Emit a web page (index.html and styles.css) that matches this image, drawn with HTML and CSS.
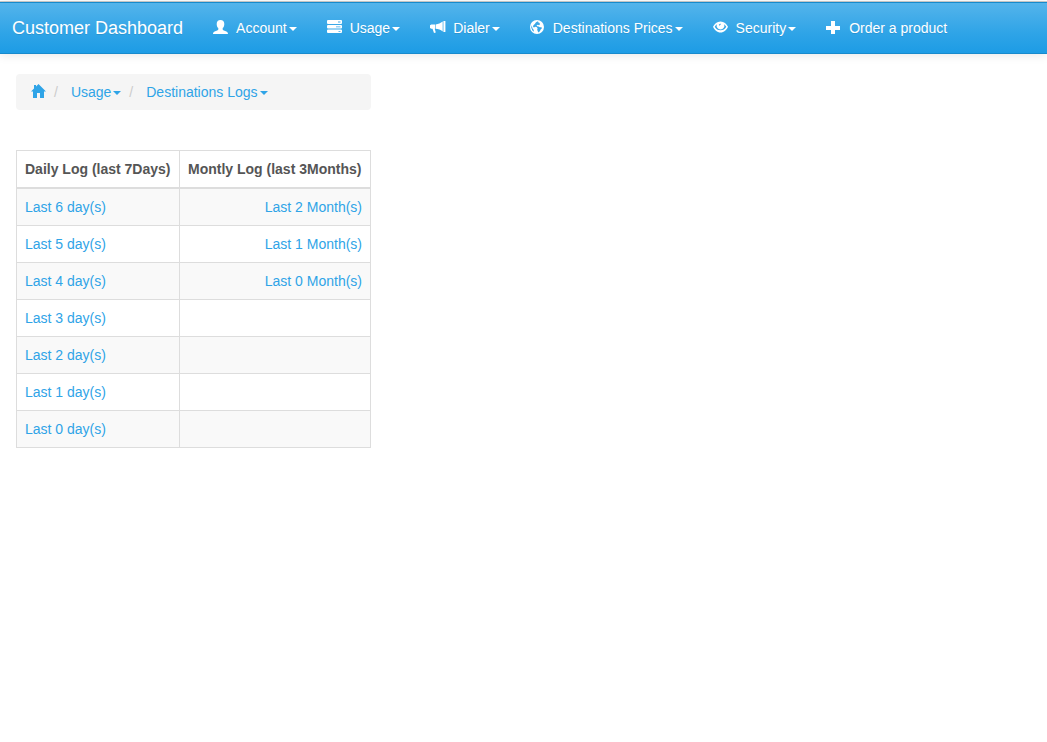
FILE: index.html
```
<!DOCTYPE html>
<html lang="en">
<head>
    <meta charset="UTF-8">
    <meta name="viewport" content="width=device-width, initial-scale=1.0">
    <title>Customer Dashboard</title>
    <link rel="stylesheet" href="styles.css">
</head>
<body>
    <nav class="navbar">
        <a class="brand" href="#">Customer Dashboard</a>
        <ul class="menu">
            <li><a href="#">
                <svg class="icon" viewBox="0 0 15 14"><path d="M7.500 0C9.900 0 11.300 1.500 11.300 3.900C11.300 5.900 10.700 7.200 9.700 8V9.200C9.700 9.900 10.200 10.200 10.900 10.500L13.400 11.500C14.500 12 15 12.800 15 14H0C0 12.800 0.500 12 1.600 11.500L4.100 10.500C4.800 10.200 5.300 9.900 5.300 9.200V8C4.300 7.200 3.700 5.900 3.700 3.900C3.700 1.500 5.100 0 7.500 0Z"/></svg>
                <span>Account</span><b class="caret"></b>
            </a></li>
            <li><a href="#">
                <svg class="icon" viewBox="0 0 15 14"><path fill-rule="evenodd" d="M1 0H14Q15 0 15 1V3Q15 4 14 4H1Q0 4 0 3V1Q0 0 1 0ZM11 1.600V2.400H13.500V1.600ZM1 5H14Q15 5 15 6V7.500Q15 8.500 14 8.500H1Q0 8.500 0 7.500V6Q0 5 1 5ZM9 6.400V7.200H13.500V6.400ZM1 9.500H14Q15 9.500 15 10.500V12Q15 13 14 13H1Q0 13 0 12V10.500Q0 9.500 1 9.500ZM11.500 11V11.800H13.500V11Z"/></svg>
                <span>Usage</span><b class="caret"></b>
            </a></li>
            <li><a href="#">
                <svg class="icon" viewBox="0 0 15 14"><path d="M13.400 1H15.400V12H13.400ZM12.700 1.600V11.400C10.500 9.900 8.400 9 5.600 8.800V4.600C8.400 4.200 10.500 3.200 12.700 1.600ZM0 5.300L1.300 4.600H5V8.800H4.700L5.800 12.500L4 13L2.500 8.800H1.300L0 8Z"/></svg>
                <span>Dialer</span><b class="caret"></b>
            </a></li>
            <li><a href="#">
                <svg class="icon" viewBox="0 0 15 14"><path fill-rule="evenodd" d="M7 0A7 7 0 1 1 7 14A7 7 0 1 1 7 0ZM8 1.200L6 2.200L4.800 4L3.400 5.200L3 7L4.200 7.600L5 6.800L6.600 7L7.600 8.200L7.200 9.800L8 11.800L8.600 12.600L10 11L10.600 9.600L11.800 8.400L11.600 7.200L9.800 7.200L8.600 6.400L7 6.200L6.600 5.200L8 4.800L9 5.200L10 4.200L9.400 2.800L8.400 2.600ZM1.800 5.200L1.200 7.600L2.400 10.400L4 11.800L3.600 9.800L2.400 8.200Z"/></svg>
                <span>Destinations Prices</span><b class="caret"></b>
            </a></li>
            <li><a href="#">
                <svg class="icon" viewBox="0 0 15 14"><path fill-rule="evenodd" d="M7.500 1.500C11 1.500 13.500 4 15 6.700C13.500 9.800 11 12.500 7.500 12.500S1.500 9.800 0 6.700C1.500 4 4 1.500 7.500 1.500ZM3.900 4.200C2.900 4.900 2.200 5.800 1.700 6.700C3 9.100 4.900 10.200 7.500 10.200S12 9.100 13.300 6.700C12.800 5.800 12.100 4.900 11.100 4.200A3.900 3.900 0 1 1 3.900 4.200ZM5.800 4.800L7.300 3.600L7.800 4.500L6.400 5.800Z"/></svg>
                <span>Security</span><b class="caret"></b>
            </a></li>
            <li><a href="#">
                <svg class="icon" viewBox="0 0 15 14"><path d="M5 1H9V6H14V10H9V14H5V10H0V6H5Z"/></svg>
                <span>Order a product</span>
            </a></li>
        </ul>
    </nav>

    <main class="content">
        <ul class="breadcrumb">
            <li><a href="#" aria-label="Home">
                <svg class="icon" viewBox="0 0 15 14"><path d="M7.500 0L15 7.400H13V14H9V9H6V14H2V7.400H0L3 4.400V1H5V2.500Z"/></svg>
            </a></li>
            <li><a href="#">Usage<b class="caret"></b></a></li>
            <li><a href="#">Destinations Logs<b class="caret"></b></a></li>
        </ul>

        <table class="logs">
            <thead>
                <tr>
                    <th>Daily Log (last 7Days)</th>
                    <th>Montly Log (last 3Months)</th>
                </tr>
            </thead>
            <tbody>
                <tr><td><a href="#">Last 6 day(s)</a></td><td><a href="#">Last 2 Month(s)</a></td></tr>
                <tr><td><a href="#">Last 5 day(s)</a></td><td><a href="#">Last 1 Month(s)</a></td></tr>
                <tr><td><a href="#">Last 4 day(s)</a></td><td><a href="#">Last 0 Month(s)</a></td></tr>
                <tr><td><a href="#">Last 3 day(s)</a></td><td></td></tr>
                <tr><td><a href="#">Last 2 day(s)</a></td><td></td></tr>
                <tr><td><a href="#">Last 1 day(s)</a></td><td></td></tr>
                <tr><td><a href="#">Last 0 day(s)</a></td><td></td></tr>
            </tbody>
        </table>
    </main>
</body>
</html>
```
FILE: styles.css
```
* { box-sizing: border-box; }
body { margin: 0; padding-top: 1px; font-family: "Liberation Sans", Arial, sans-serif; font-size: 14px; line-height: 20px; color: #555; background: #fff; }
body::before { content: ""; display: block; height: 1px; background: #ccc; }
a { color: #2fa4e7; text-decoration: none; }
a:hover { text-decoration: underline; }
ul { list-style: none; margin: 0; padding: 0; }
.navbar { display: flex; min-height: 52px; padding-left: 12px; border: solid #178acc; border-width: 1px 0; background: linear-gradient(#54b4eb, #2fa4e7 60%, #1d9ce5); box-shadow: 0 1px 10px rgba(0, 0, 0, 0.1); }
.navbar a { color: #fff; text-shadow: 0 1px 0 rgba(0, 0, 0, 0.1); white-space: nowrap; }
.brand { padding: 15px 15px 15px 0; font-size: 18px; }
.menu { display: flex; }
.menu a { display: flex; align-items: center; padding: 15px; }
.icon { display: block; flex: none; width: 15px; height: 14px; margin-bottom: 2px; fill: currentColor; overflow: visible; }
.menu .icon { margin-right: 8px; }
.caret { display: inline-block; margin-left: 2px; vertical-align: middle; border: 4px solid transparent; border-top-color: currentColor; border-bottom: 0; }
.menu .caret { margin-top: 2px; }
.content { width: fit-content; min-width: 387px; padding: 20px 16px; }
.breadcrumb { display: flex; padding: 8px 15px; margin-bottom: 40px; background: #f5f5f5; border-radius: 4px; }
.breadcrumb li { display: flex; align-items: center; }
.breadcrumb li + li::before { content: "/"; padding: 0 13px 0 8px; color: #ccc; }
.logs { width: 100%; border-collapse: collapse; }
th, td { border: 1px solid #ddd; padding: 8px; height: 37px; text-align: left; white-space: nowrap; }
th { border-bottom-width: 2px; }
td:last-child { text-align: right; }
tbody tr:nth-child(odd) { background-color: #f9f9f9; }
```
